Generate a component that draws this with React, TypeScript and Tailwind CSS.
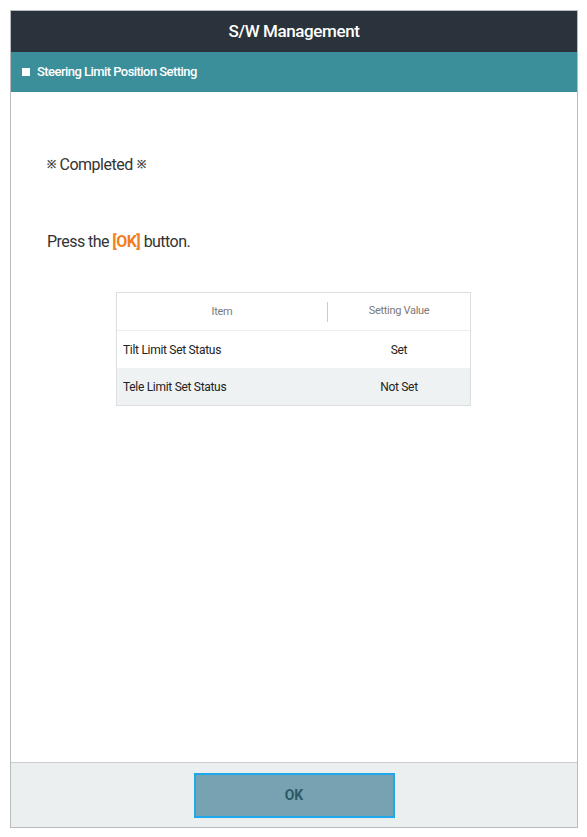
import React from 'react';

const rows = [
    { item: 'Tilt Limit Set Status', value: 'Set' },
    { item: 'Tele Limit Set Status', value: 'Not Set' },
];

const App: React.FC = () => {
    return (
        <div className="w-[587px] h-[837px] bg-white pt-[10px] pl-[10px] pr-[9px] pb-[9px] font-['Roboto',sans-serif]">
            <div className="h-full flex flex-col border border-[#b9bcbf]">
                {/* Title bar */}
                <div className="h-[41px] bg-[#2a323b] flex items-center justify-center">
                    <h1 className="text-white text-[17px] font-medium tracking-[-0.4px]">S/W Management</h1>
                </div>

                {/* Section bar */}
                <div className="h-[40px] bg-[#3a8f9a] flex items-center pl-[11px] gap-[7px]">
                    <span className="w-[8px] h-[8px] bg-white"></span>
                    <span className="text-white text-[13px] font-medium tracking-[-0.55px]">Steering Limit Position Setting</span>
                </div>

                {/* Body */}
                <div className="flex-1 bg-white pl-[36px] pt-[61px]">
                    <p className="text-[16px] leading-[24px] text-[#333] tracking-[-0.5px] flex items-center gap-[4px]">
                        <span className="text-[11px] font-bold text-[#444]">※</span>
                        <span>Completed</span>
                        <span className="text-[11px] font-bold text-[#444]">※</span>
                    </p>
                    <p className="mt-[53px] text-[16px] leading-[24px] text-[#333] tracking-[-0.55px]">
                        Press the <span className="text-[#f07f22] font-bold">[OK]</span> button.
                    </p>

                    <div className="mt-[38px] ml-[69px] w-[355px] border border-[#dcdfe1] text-[12px]">
                        <div className="h-[38px] flex items-center border-b border-[#eceeef] text-[11px] text-[#7a7a7a] tracking-[-0.3px]">
                            <div className="w-[211px] text-center border-r border-[#c9cccf] leading-[20px]">Item</div>
                            <div className="flex-1 text-center">Setting Value</div>
                        </div>
                        {rows.map((r, i) => (
                            <div key={r.item} className={`h-[37px] flex items-center ${i % 2 === 1 ? 'bg-[#eef2f3]' : 'bg-white'}`}>
                                <div className="w-[211px] pl-[6px] text-[#222] tracking-[-0.3px]">{r.item}</div>
                                <div className="flex-1 text-center text-[#222] tracking-[-0.3px]">{r.value}</div>
                            </div>
                        ))}
                    </div>
                </div>

                {/* Footer */}
                <div className="h-[65px] bg-[#ebeff0] border-t border-[#c9cdd0] flex items-center justify-center">
                    <button className="w-[201px] h-[45px] bg-[#76a2b2] border-2 border-[#1ea7ea] text-[#2e5866] text-[14px] font-bold">
                        OK
                    </button>
                </div>
            </div>
        </div>
    );
};

export default App;
